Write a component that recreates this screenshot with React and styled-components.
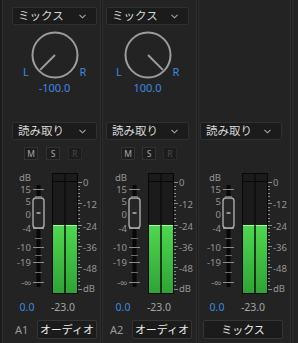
import React from 'react';
import styled, {createGlobalStyle} from 'styled-components';

const GlobalStyle = createGlobalStyle`
  html, body {
    margin: 0;
    padding: 0;
    background: #1a1a1a;
  }
  body {
    font-family: "Noto Sans", "Noto Sans CJK JP", sans-serif;
  }
  * {
    box-sizing: border-box;
  }
`;

const Mixer = styled.div`
  display: flex;
  gap: 1px;
  width: 298px;
  height: 343px;
  padding-left: 2px;
  background: #1a1a1a;
  overflow: hidden;
`;

const Channel = styled.div`
  display: flex;
  flex-direction: column;
  width: ${p => p.$w}px;
  padding: 7px 0 0 ${p => p.$pad}px;
  background: #232323;
  border-left: 1px solid #2e2e2e;
  border-right: 1px solid #2e2e2e;
`;

const Edge = styled.div`
  flex: 1;
  background: #232323;
  border-left: 1px solid #2e2e2e;
`;

const Select = styled.div`
  display: flex;
  align-items: center;
  justify-content: space-between;
  width: ${p => p.$w}px;
  height: 18px;
  padding: 0 10px 0 5px;
  background: #1b1b1b;
  border: 1px solid #303030;
  border-radius: 2px;
  color: #d6d6d6;
  font-size: 11.5px;
  line-height: 16px;
`;

const SelectSpace = styled.div`
  height: 18px;
`;

const PanArea = styled.div`
  display: flex;
  flex-direction: column;
  align-items: center;
  width: ${p => p.$w}px;
  height: 97px;
  padding-top: 6px;
`;

const KnobRow = styled.div`
  display: flex;
  align-items: flex-end;
  height: 48px;
`;

const Side = styled.span`
  width: 9px;
  margin-bottom: 1px;
  text-align: center;
  color: #3d8ae0;
  font-size: 11px;
  line-height: 12px;
`;

const PanValue = styled.div`
  margin-top: 3px;
  color: #3d8ae0;
  font-size: 11px;
  line-height: 12px;
`;

const ButtonRow = styled.div`
  display: flex;
  gap: ${p => p.$gap}px;
  height: 13px;
  margin: 7px 0 0 ${p => p.$left}px;
`;

const SoloButton = styled.div`
  display: flex;
  align-items: center;
  justify-content: center;
  width: 14px;
  height: 13px;
  background: #1c1c1c;
  border: 1px solid ${p => (p.$off ? '#2a2a2a' : '#323232')};
  color: ${p => (p.$off ? '#4a4a4a' : '#a8a8a8')};
  font-size: 8.5px;
  line-height: 11px;
`;

const MeterBox = styled.div`
  margin: 10px 0 0 ${p => p.$shift}px;
  height: 127px;
`;

const ValueRow = styled.div`
  display: grid;
  grid-template-columns: 34px 38px;
  height: 20px;
  margin-left: ${p => p.$shift}px;
  font-size: 10.5px;
  line-height: 20px;
  text-align: center;
`;

const Gain = styled.span`
  color: #3d8ae0;
`;

const Level = styled.span`
  color: #a4a4a4;
`;

const Footer = styled.div`
  display: flex;
  align-items: center;
  height: 19px;
  margin: 3px 0 0 ${p => p.$left}px;
`;

const TrackId = styled.span`
  width: 22px;
  color: #9a9a9a;
  font-size: 11px;
`;

const NameBox = styled.div`
  width: ${p => p.$w}px;
  height: 19px;
  background: #1b1b1b;
  border: 1px solid #353535;
  border-radius: 2px;
  color: #ececec;
  font-size: 11px;
  line-height: 17px;
  text-align: center;
`;

const Chevron = () => (
  <svg width="7" height="5" viewBox="0 0 7 5">
    <polyline points="0.5,0.8 3.5,3.8 6.5,0.8" fill="none" stroke="#a8a8a8" strokeWidth="1.1" />
  </svg>
);

const Knob = ({pan}) => {
  const a = (pan / 100) * 135 * Math.PI / 180;
  const x = 24 + Math.sin(a) * 21;
  const y = 24 - Math.cos(a) * 21;
  return (
    <svg width="48" height="48" viewBox="0 0 48 48">
      <circle cx="24" cy="24" r="22.5" fill="none" stroke="#9c9c9c" strokeWidth="2" />
      <line x1="24" y1="24" x2={x} y2={y} stroke="#9c9c9c" strokeWidth="2" />
    </svg>
  );
};

const faderMarks = [
  {t: '15', y: 19.5, tick: 19},
  {t: '5', y: 31, tick: 32},
  {t: '0', y: 44, tick: 43},
  {t: '-4', y: 58, tick: 58},
  {t: '-10', y: 77, tick: 77},
  {t: '-19', y: 92, tick: 92},
  {t: '-∞', y: 112, tick: 112},
];

const meterMarks = [
  {t: '0', y: 12},
  {t: '-12', y: 34},
  {t: '-24', y: 56},
  {t: '-36', y: 77},
  {t: '-48', y: 98},
  {t: 'dB', y: 118},
];

const Meter = ({id}) => {
  const dots = Array.from({length: 31}, (_, i) => 12 + i * 3.55);
  return (
    <svg width="90" height="127" viewBox="0 0 90 127" fontFamily="Noto Sans, sans-serif" fontSize="9.5">
      <defs>
        <linearGradient id={`g${id}`} x1="0" y1="0" x2="0" y2="1">
          <stop offset="0" stopColor="#4fd84f" />
          <stop offset="1" stopColor="#2fa336" />
        </linearGradient>
      </defs>
      <text x="9" y="7.5" dominantBaseline="central" fill="#959595">dB</text>
      {faderMarks.map(m => (
        <text key={m.t} x="21" y={m.y} textAnchor="end" dominantBaseline="central" fill="#959595">{m.t}</text>
      ))}
      <rect x="26.5" y="15" width="4" height="102" fill="#080808" />
      {faderMarks.map(m => (
        <line key={m.t} x1="23" x2="34" y1={m.tick + 0.5} y2={m.tick + 0.5} stroke="#8c8c8c" strokeWidth="1" />
      ))}
      {faderMarks.slice(0, -1).map((m, i) => {
        const y = Math.round((m.tick + faderMarks[i + 1].tick) / 2) + 0.5;
        return <line key={m.t} x1="25" x2="32" y1={y} y2={y} stroke="#6e6e6e" strokeWidth="1" />;
      })}
      <rect x="23" y="28" width="11" height="30" rx="3" fill="#262626" stroke="#ababab" strokeWidth="1.4" />
      <line x1="26.5" x2="30.5" y1="43" y2="43" stroke="#b5b5b5" strokeWidth="1.5" />

      <rect x="42.5" y="3.5" width="25" height="120" fill="#1b1b1b" stroke="#070707" />
      <line x1="43" x2="67" y1="11.5" y2="11.5" stroke="#070707" />
      <rect x="43" y="55" width="11.5" height="68" fill={`url(#g${id})`} />
      <rect x="55.5" y="55" width="11.5" height="68" fill={`url(#g${id})`} />
      <rect x="43" y="55" width="11.5" height="1" fill="#a4f79a" />
      <rect x="55.5" y="55" width="11.5" height="1" fill="#a4f79a" />
      <line x1="55" x2="55" y1="4" y2="123" stroke="#070707" />

      {dots.map((y, i) => (
        <line key={i} x1="68" x2={i % 6 === 0 ? 72 : 70} y1={Math.round(y) + 0.5} y2={Math.round(y) + 0.5} stroke="#8a8a8a" />
      ))}
      {meterMarks.map(m => (
        <text key={m.t} x="73" y={m.y} dominantBaseline="central" fill="#959595">{m.t}</text>
      ))}
    </svg>
  );
};

const channels = [
  {w: 99, pad: 9, sel: 85, mix: 'ミックス', pan: -100, panText: '-100.0', btnLeft: 12, btnGap: 8, shift: -2, footLeft: 3, id: 'A1', name: 'オーディオ', nameW: 60},
  {w: 95, pad: 3, sel: 83, mix: 'ミックス', pan: 100, panText: '100.0', btnLeft: 15, btnGap: 7, shift: 0, footLeft: 4, id: 'A2', name: 'オーディオ', nameW: 60},
  {w: 93, pad: 1, sel: 82, master: true, shift: 0, footLeft: 3, name: 'ミックス', nameW: 80},
];

const App = () => (
  <>
    <GlobalStyle />
    <Mixer>
      {channels.map((c, i) => (
        <Channel key={i} $w={c.w} $pad={c.pad}>
          {c.master ? (
            <>
              <SelectSpace />
              <PanArea $w={c.sel} />
            </>
          ) : (
            <>
              <Select $w={c.sel}>
                <span>{c.mix}</span>
                <Chevron />
              </Select>
              <PanArea $w={c.sel}>
                <KnobRow>
                  <Side>L</Side>
                  <Knob pan={c.pan} />
                  <Side>R</Side>
                </KnobRow>
                <PanValue>{c.panText}</PanValue>
              </PanArea>
            </>
          )}
          <Select $w={c.sel}>
            <span>読み取り</span>
            <Chevron />
          </Select>
          <ButtonRow $left={c.btnLeft || 0} $gap={c.btnGap || 0}>
            {!c.master && (
              <>
                <SoloButton>M</SoloButton>
                <SoloButton>S</SoloButton>
                <SoloButton $off>R</SoloButton>
              </>
            )}
          </ButtonRow>
          <MeterBox $shift={c.shift}>
            <Meter id={i} />
          </MeterBox>
          <ValueRow $shift={c.shift}>
            <Gain>0.0</Gain>
            <Level>-23.0</Level>
          </ValueRow>
          <Footer $left={c.footLeft}>
            {c.id && <TrackId>{c.id}</TrackId>}
            <NameBox $w={c.nameW}>{c.name}</NameBox>
          </Footer>
        </Channel>
      ))}
      <Edge />
    </Mixer>
  </>
);

export default App;
